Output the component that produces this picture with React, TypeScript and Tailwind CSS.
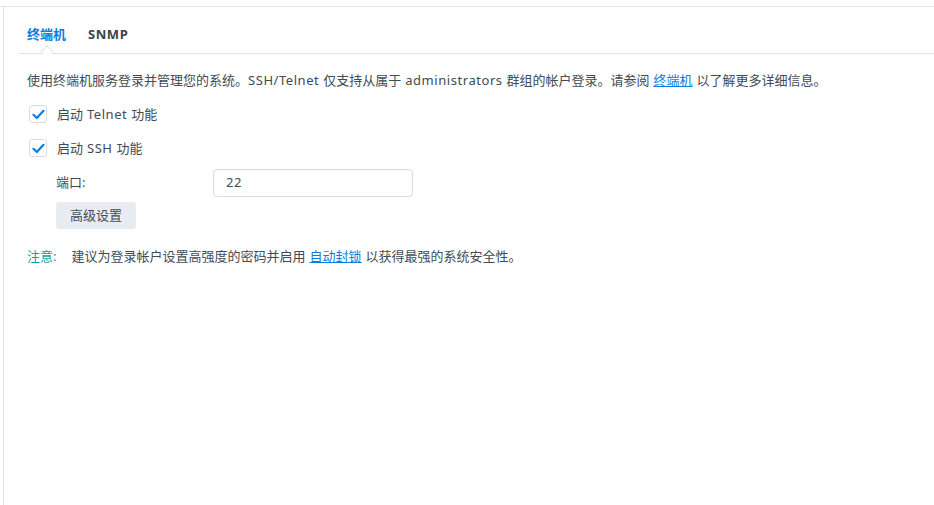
import React from "react";

const font = { fontFamily: '"Noto Sans", "Noto Sans CJK SC", sans-serif' };

function L({ children }: { children: React.ReactNode }) {
  return <span className="tracking-[0.55px]">{children}</span>;
}

function Check() {
  return (
    <span className="flex h-[18px] w-[18px] items-center justify-center rounded-[3px] border border-[#d5dde6] bg-white">
      <svg width="13" height="11" viewBox="0 0 13 11" fill="none">
        <path d="M1.5 5.8 L4.8 9 L11.5 1.8" stroke="#0a7ee0" strokeWidth="2.2" strokeLinecap="round" strokeLinejoin="round" />
      </svg>
    </span>
  );
}

export default function App() {
  return (
    <div className="h-[505px] w-[934px] overflow-hidden bg-white text-[13px] text-[#414b55]" style={font}>
      <div className="mt-[6px] flex h-[499px] border-t border-[#e6e6e6]">
        <div className="w-[3px]" />
        <div className="flex-1 border-l border-[#e3e3e3]">
          <div className="relative ml-[15px] mt-[17px] flex h-[30px] items-start border-b border-[#dbe3ea]">
            <div className="relative px-[8px] text-[13px] font-bold leading-[20px] text-[#0a7ee0]">
              终端机
              <span className="absolute left-1/2 top-[23px] h-[9px] w-[9px] -translate-x-1/2 rotate-45 border-l border-t border-[#dbe3ea] bg-white" />
            </div>
            <div className="ml-[6px] px-[8px] text-[13px] font-bold leading-[20px] text-[#3b444d]">
              <L>SNMP</L>
            </div>
          </div>
          <div className="pl-[23px] pt-[16px]">
            <p className="leading-[20px]">
              使用终端机服务登录并管理您的系统。<L>SSH/Telnet </L>仅支持从属于<L> administrators </L>群组的帐户登录。请参阅<L> </L>
              <a className="text-[#0a7ee0] underline">终端机</a>
              <L> </L>以了解更多详细信息。
            </p>
            <div className="mt-[14px] flex items-center gap-[10px] pl-[2px] leading-[20px]">
              <Check />
              <span>
                启动<L> Telnet </L>功能
              </span>
            </div>
            <div className="mt-[14px] flex items-center gap-[10px] pl-[2px] leading-[20px]">
              <Check />
              <span>
                启动<L> SSH </L>功能
              </span>
            </div>
            <div className="ml-[29px] mt-[11px] flex items-center">
              <span className="w-[157px]">端口:</span>
              <div className="flex h-[28px] w-[200px] items-center rounded-[4px] border border-[#d5dde6] px-[12px]">
                <L>22</L>
              </div>
            </div>
            <button className="ml-[29px] mt-[5px] h-[27px] w-[80px] rounded-[3px] bg-[#e8ecf2] text-[13px] text-[#414b55]">
              高级设置
            </button>
            <p className="mt-[17px] leading-[20px]">
              <span className="text-[#14a0a0]">注意:</span>
              <span className="ml-[15px]">
                建议为登录帐户设置高强度的密码并启用<L> </L>
                <a className="text-[#0a7ee0] underline">自动封锁</a>
                <L> </L>以获得最强的系统安全性。
              </span>
            </p>
          </div>
        </div>
      </div>
    </div>
  );
}
